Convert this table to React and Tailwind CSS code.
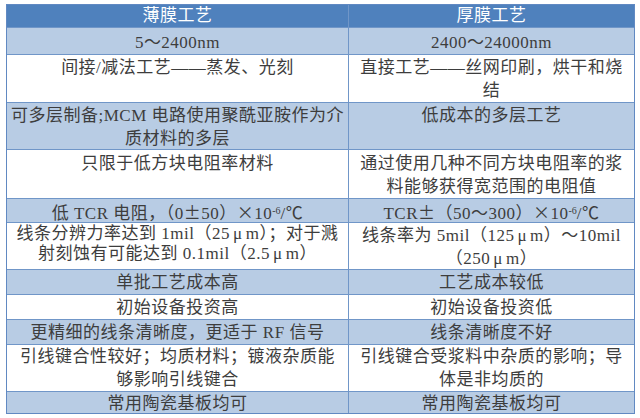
const LIGHT = 'bg-[#b8cce4]';
const WHITE = 'bg-white';

function Sup() {
  return <sup className="text-[10px] tracking-normal">-6</sup>;
}

// full-width symbols as in the Song-style source font
function W({ children }) {
  return <span className="font-['Noto_Sans_CJK_SC',sans-serif]">{children}</span>;
}

function Mu() {
  return <span className="mx-[3px]">μ</span>;
}

const rows = [
  { bg: LIGHT, h: 'h-[27px]', pt: 'pt-[3px]', left: ['5～2400nm'], right: ['2400～24000nm'] },
  { bg: WHITE, h: 'h-[48px]', left: ['间接/减法工艺——蒸发、光刻'], right: ['直接工艺——丝网印刷，烘干和烧', '结'] },
  { bg: LIGHT, h: 'h-[47px]', left: ['可多层制备;MCM 电路使用聚酰亚胺作为介', '质材料的多层'], right: ['低成本的多层工艺'] },
  { bg: WHITE, h: 'h-[49px]', pt: 'pt-[2px]', left: ['只限于低方块电阻率材料'], right: ['通过使用几种不同方块电阻率的浆', '料能够获得宽范围的电阻值'] },
  {
    bg: LIGHT,
    h: 'h-[24px]',
    left: [<>低 TCR 电阻，（0<W>±</W>50）<W>×</W>10<Sup />/℃</>],
    right: [<>TCR<W>±</W>（50～300）<W>×</W>10<Sup />/℃</>],
  },
  {
    bg: WHITE,
    h: 'h-[47px]',
    left: [
      <>线条分辨力率达到 1mil（25<Mu />m）；对于溅</>,
      <>射刻蚀有可能达到 0.1mil（2.5<Mu />m）</>,
    ],
    leftLead: 'leading-[20px]',
    right: [<>线条率为 5mil（125<Mu />m）～10mil</>, <>（250<Mu />m）</>],
  },
  { bg: LIGHT, h: 'h-[25px]', left: ['单批工艺成本高'], right: ['工艺成本较低'] },
  { bg: WHITE, h: 'h-[25px]', left: ['初始设备投资高'], right: ['初始设备投资低'] },
  { bg: LIGHT, h: 'h-[25px]', left: ['更精细的线条清晰度，更适于 RF 信号'], right: ['线条清晰度不好'] },
  { bg: WHITE, h: 'h-[47px]', pt: 'pt-0', left: ['引线键合性较好；均质材料；镀液杂质能', '够影响引线键合'], right: ['引线键合受浆料中杂质的影响；导', '体是非均质的'] },
  { bg: LIGHT, h: 'h-[22px]', pt: 'pt-0', left: ['常用陶瓷基板均可'], right: ['常用陶瓷基板均可'], last: true },
];

function Cell({ lines, className = '', lead = 'leading-[23px]' }) {
  return (
    <div className={`text-center ${lead} ${className}`}>
      {lines.map((l, i) => (
        <div key={i} className="whitespace-nowrap">{l}</div>
      ))}
    </div>
  );
}

export default function App() {
  return (
    <div className="w-[640px] h-[418px] bg-white pt-[4px] pl-[6px] font-['Liberation_Serif','Noto_Sans_CJK_SC',serif] text-[17px] tracking-[0.5px] text-[#3d3d3d]">
      <div className="w-[629px] border-t border-x border-[#6189c2]">
        <div className="flex h-[23px] bg-[#4f81bd] border-b border-[#7096c8] text-white leading-[22px]">
          <div className="w-[342px] text-center border-r border-[#7096c8]">薄膜工艺</div>
          <div className="flex-1 text-center">厚膜工艺</div>
        </div>
        {rows.map((r, i) => (
          <div
            key={i}
            className={`flex ${r.h} ${r.bg} ${r.last ? 'border-b border-[#6189c2]' : 'border-b border-[#7096c8]'}`}
          >
            <Cell
              lines={r.left}
              lead={r.leftLead || 'leading-[23px]'}
              className={`w-[342px] border-r border-[#7096c8] ${r.pt || 'pt-[1px]'}`}
            />
            <Cell lines={r.right} className={`flex-1 ${r.pt || 'pt-[1px]'}`} />
          </div>
        ))}
      </div>
    </div>
  );
}
